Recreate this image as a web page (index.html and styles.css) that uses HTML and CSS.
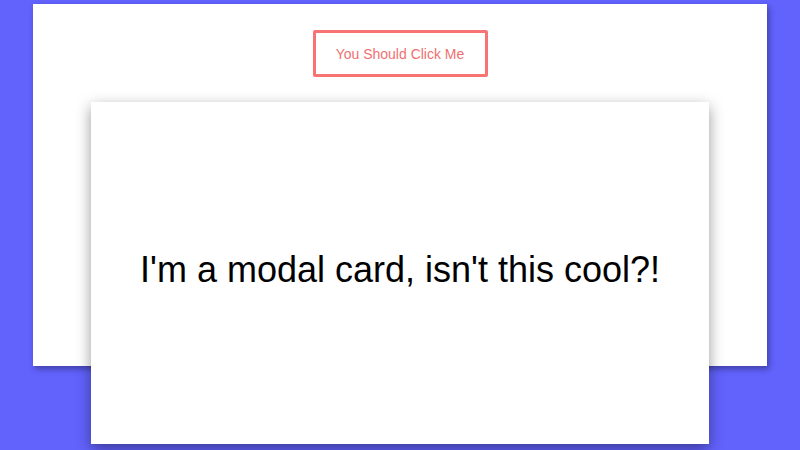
FILE: index.html
```html
<!DOCTYPE html>
<html>
<head>
<meta charset="utf-8">
<link rel="stylesheet" href="styles.css">
</head>
<body>
<div class="page">
  <div class="card">
    <button class="cta">You Should Click Me</button>
  </div>
  <div class="modal">
    <p class="modal-text">I'm a modal card, isn't this cool?!</p>
  </div>
</div>
</body>
</html>
```

FILE: styles.css
```css
html, body {
  margin: 0;
  padding: 0;
  height: 100%;
}
body {
  background: #6262fd;
  font-family: "Liberation Sans", Arial, sans-serif;
  overflow: hidden;
}
.page {
  position: relative;
  width: 800px;
  height: 450px;
}
.card {
  margin: 4px 33px 0 33px;
  height: 362px;
  background: #fff;
  box-shadow: 2px 3px 6px rgba(0, 0, 0, 0.35);
  display: flex;
  justify-content: center;
  align-items: flex-start;
  padding-top: 26px;
  box-sizing: border-box;
}
.cta {
  width: 175px;
  height: 47px;
  background: #fff;
  border: 3px solid #f87474;
  border-radius: 2px;
  color: #f07070;
  font-family: "Liberation Sans", Arial, sans-serif;
  font-size: 14px;
  cursor: pointer;
}
.modal {
  position: absolute;
  left: 91px;
  top: 98px;
  width: 618px;
  height: 342px;
  background: #fff;
  box-shadow: 0 5px 14px rgba(0, 0, 0, 0.4);
  display: flex;
  align-items: center;
  justify-content: center;
}
.modal-text {
  margin: 0;
  padding-bottom: 6px;
  font-size: 36px;
  color: #000;
}
```
